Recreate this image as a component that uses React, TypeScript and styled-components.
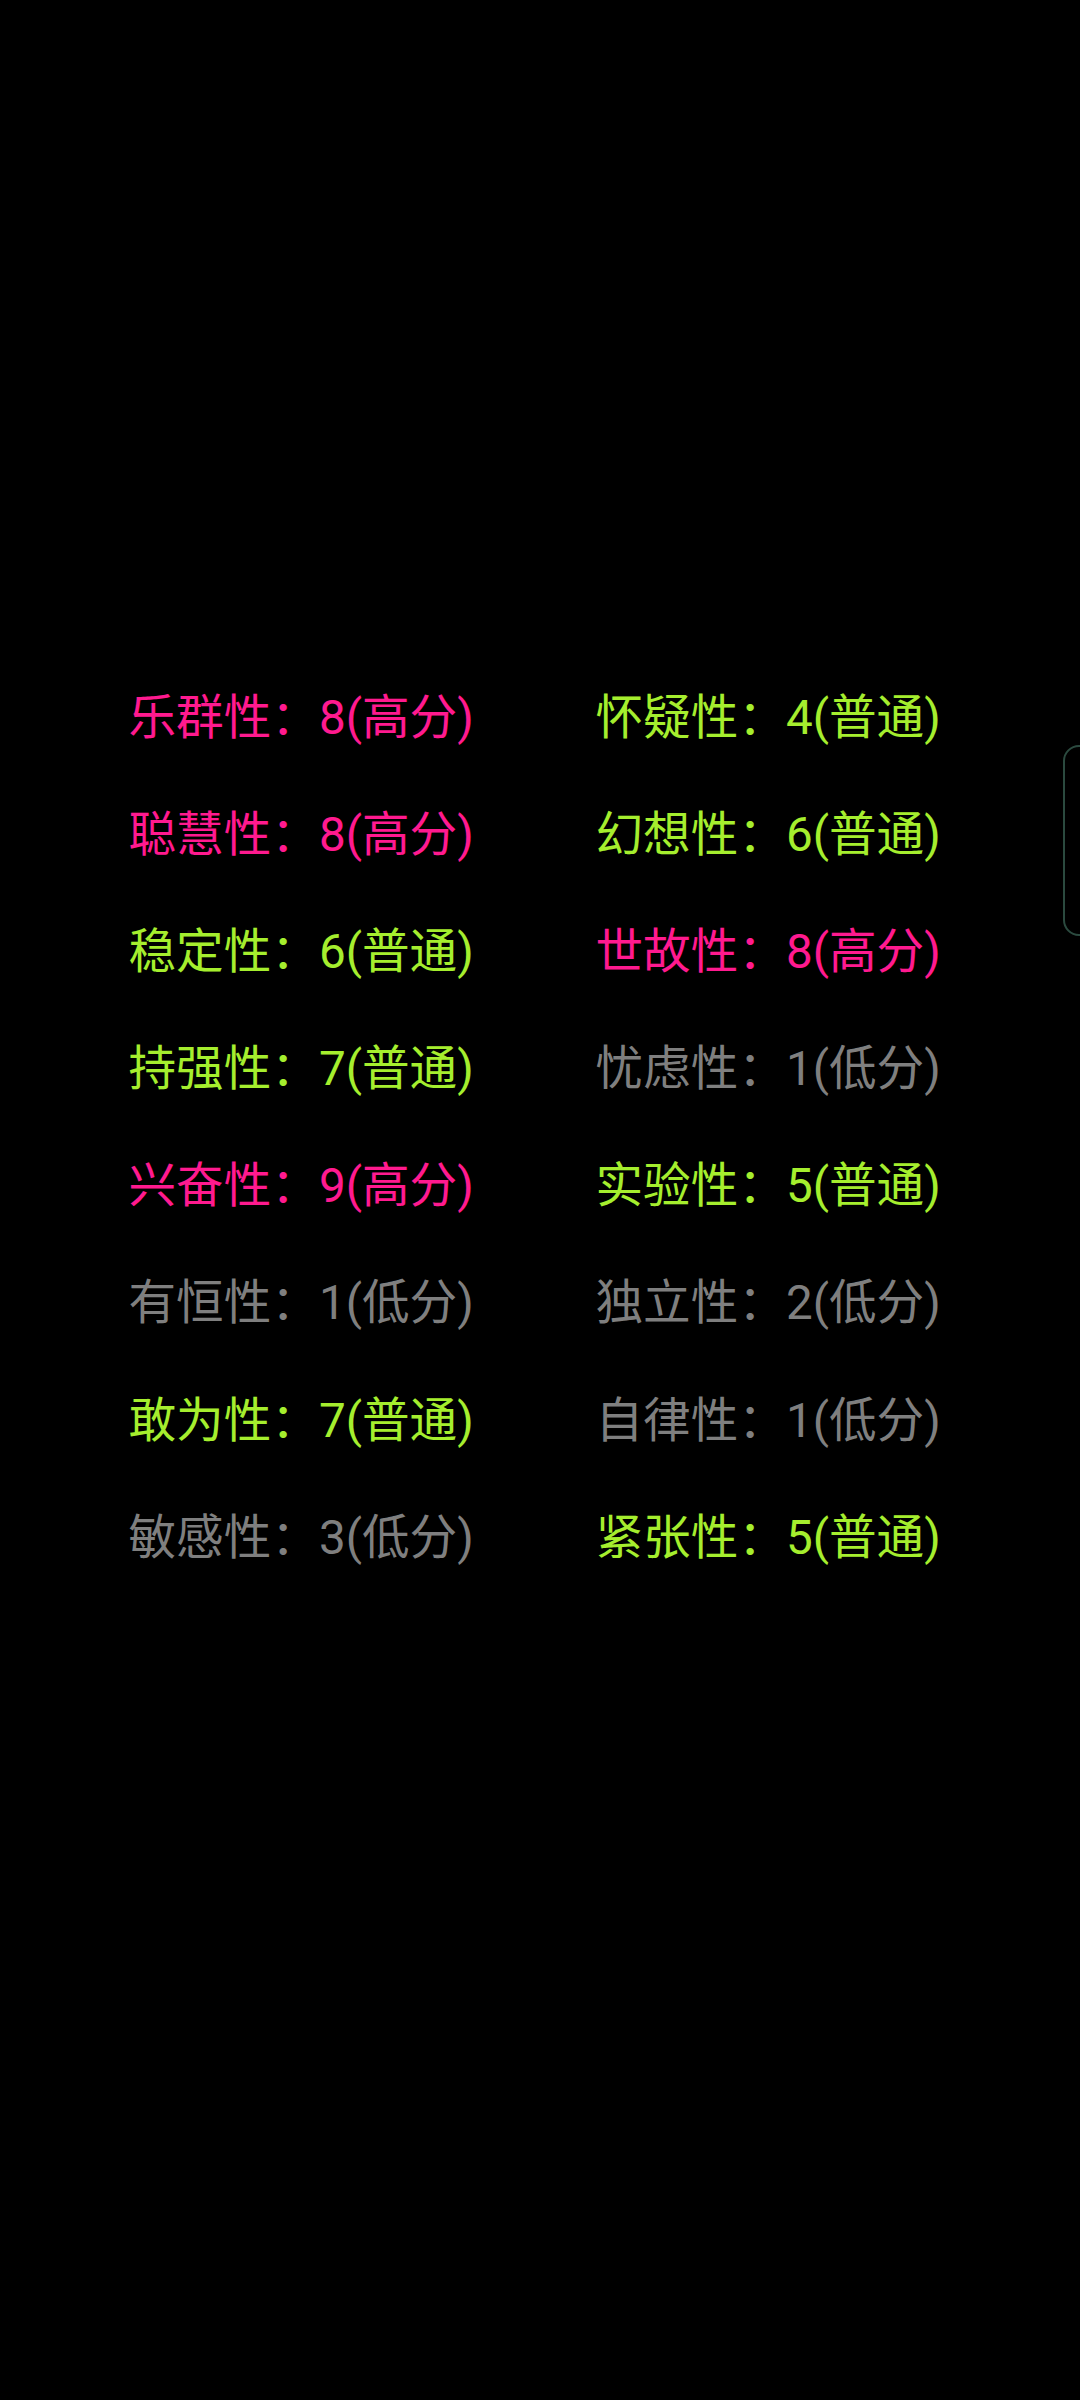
import React from "react";
import styled, { createGlobalStyle } from "styled-components";

const GlobalStyle = createGlobalStyle`
  html, body {
    margin: 0;
    padding: 0;
    background: #000;
  }
  body {
    font-family: Roboto, "Noto Sans CJK SC", sans-serif;
  }
`;

const Screen = styled.div`
  position: relative;
  width: 1080px;
  height: 2400px;
  background: #000;
  overflow: hidden;
`;

const Grid = styled.div`
  display: grid;
  grid-template-columns: 467px 467px;
  grid-auto-rows: 117.1px;
  padding: 660px 0 0 128.5px;
`;

type Level = "high" | "mid" | "low";

const colors: Record<Level, string> = {
  high: "#ff1a8f",
  mid: "#a5ee2e",
  low: "#7f7f7f",
};

const Trait = styled.div<{ $level: Level }>`
  font-family: Roboto, "Noto Sans CJK SC", sans-serif;
  font-size: 47.6px;
  line-height: 117.1px;
  white-space: nowrap;
  color: ${(p) => colors[p.$level]};
`;

const SideHandle = styled.div`
  position: absolute;
  top: 745px;
  right: -20px;
  width: 33px;
  height: 187px;
  border: 2px solid #2b4a3f;
  border-radius: 16px;
`;

const label: Record<Level, string> = {
  high: "高分",
  mid: "普通",
  low: "低分",
};

const traits: [string, number, Level][] = [
  ["乐群性", 8, "high"],
  ["怀疑性", 4, "mid"],
  ["聪慧性", 8, "high"],
  ["幻想性", 6, "mid"],
  ["稳定性", 6, "mid"],
  ["世故性", 8, "high"],
  ["持强性", 7, "mid"],
  ["忧虑性", 1, "low"],
  ["兴奋性", 9, "high"],
  ["实验性", 5, "mid"],
  ["有恒性", 1, "low"],
  ["独立性", 2, "low"],
  ["敢为性", 7, "mid"],
  ["自律性", 1, "low"],
  ["敏感性", 3, "low"],
  ["紧张性", 5, "mid"],
];

export default function App() {
  return (
    <Screen>
      <GlobalStyle />
      <Grid>
        {traits.map(([name, score, level]) => (
          <Trait key={name} $level={level}>
            {name}：{score}({label[level]})
          </Trait>
        ))}
      </Grid>
      <SideHandle />
    </Screen>
  );
}
